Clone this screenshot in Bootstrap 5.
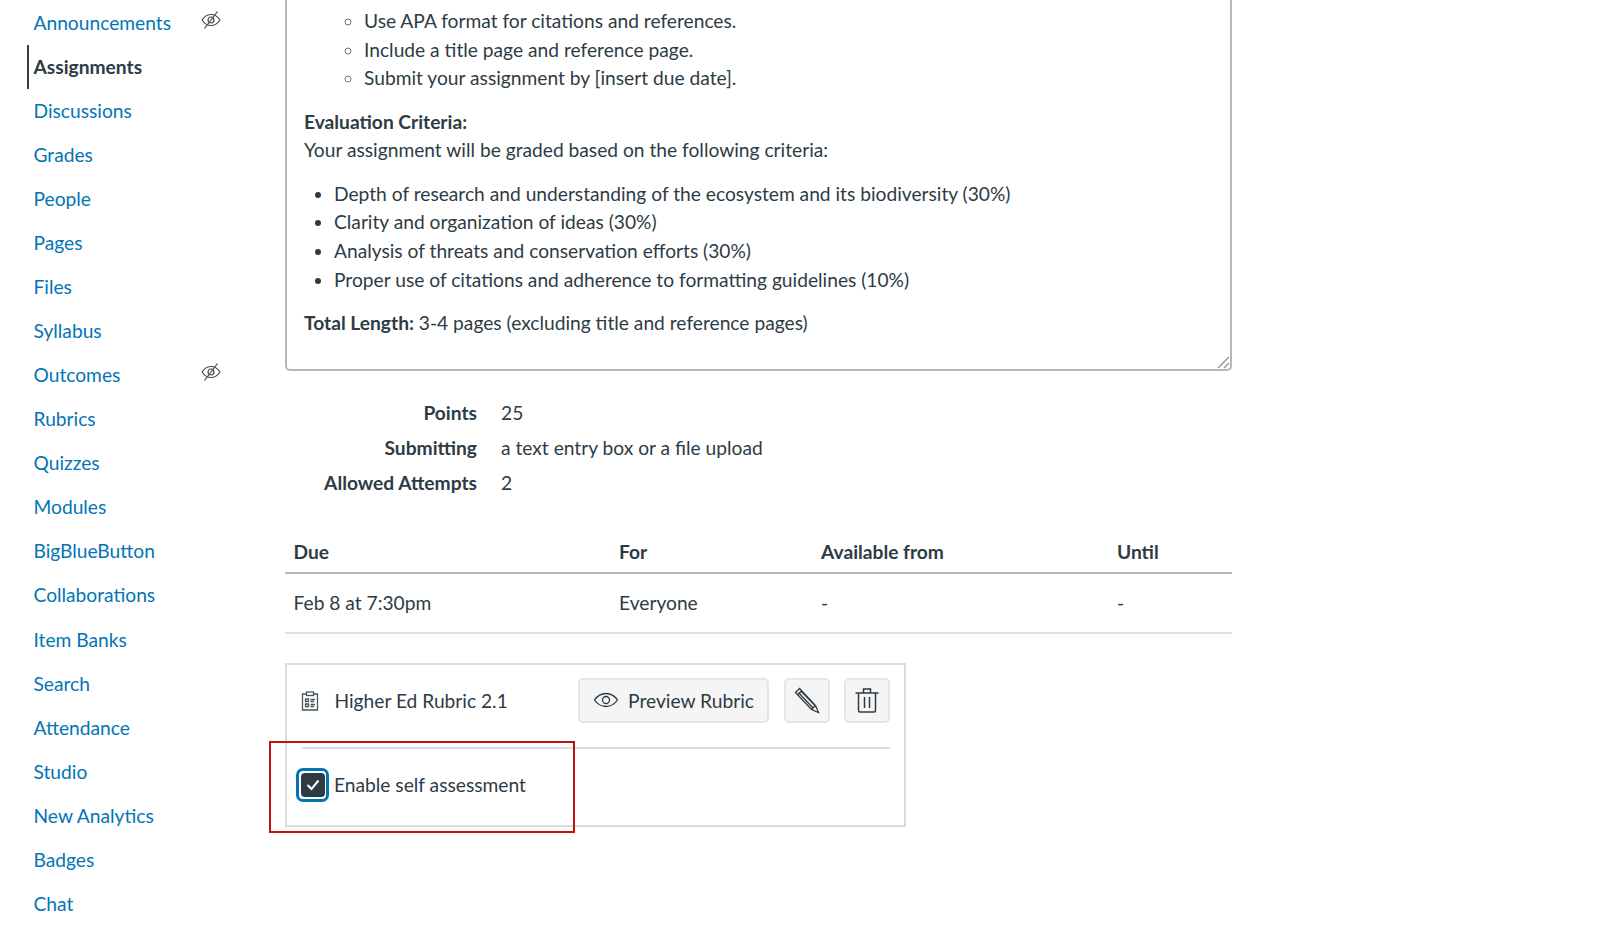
<!doctype html>
<html lang="en"><head><meta charset="utf-8"><title>Assignment</title>
<link href="https://cdn.jsdelivr.net/npm/bootstrap@5.3.0/dist/css/bootstrap.min.css" rel="stylesheet">
<style>
html,body{height:931px;overflow:hidden;background:#fff}
body{font-family:Lato,"Liberation Sans",sans-serif;font-size:19.2px;line-height:28.8px;color:#2d3b45}
.page-wrap{height:931px;overflow:hidden}
.side-col{width:285px;flex:none;padding-left:27px;padding-top:1px}
.side-list{margin:0;padding:0;list-style:none}
.side-item{height:44.07px;display:flex;align-items:center;justify-content:space-between;padding-left:4.5px;padding-right:64px;border-left:2px solid transparent}
.side-item a{color:#0374b5;text-decoration:none}
.side-item.on{border-left-color:#2d3b45}
.side-item.on a{color:#2d3b45;font-weight:700}
.eye-ic{width:20px;height:20px;margin-top:-7px}
.main-col{width:947px;flex:none}
.editor-box{position:relative;border:2px solid #b4b8bb;border-top:0;border-radius:0 0 5px 5px;padding:6.900px 18px 16.700px 17px}
.editor-box p{margin:0 0 14.4px}
.editor-box ul{margin:0 0 14.4px;padding-left:30px}
.editor-box ul ul{list-style:circle}
.editor-box ul ul li::marker{color:#6b7780}
.resize-grip{position:absolute;right:0;bottom:0;width:13px;height:13px}
.meta-wrap{margin-top:24.5px}
.meta-row{height:35px;gap:24px}
.meta-label{width:192px;text-align:right;font-weight:700}
.due-table{margin-top:34.1px;width:947px;table-layout:fixed;margin-bottom:0;--bs-table-color:#2d3b45}
.due-table th,.due-table td{padding:0 9px 0 8.500px;vertical-align:middle;font-size:19.2px}
.due-table thead tr{height:38px}
.due-table thead th{border-bottom:2px solid #b4b8bb;padding-bottom:1px}
.due-table tbody tr{height:60px}
.due-table tbody td{border-bottom:2px solid #dfe1e3;padding-top:2px}
.rubric-box{position:relative;width:621px;height:164px;margin-top:29px;border:2px solid #d8dcdf;padding:13px 14px 0 14px}
.rubric-top{height:45px;gap:14.5px}
.rubric-clip{margin-top:2px}
.rubric-title{margin-left:1px;margin-right:auto;margin-top:2px}
.soft-btn{background:#f5f5f5;border:2px solid #e3e5e7;border-radius:5px;height:45px;color:#2d3b45;font-size:19.2px;line-height:1;display:flex;align-items:center;justify-content:center;padding:0}
.soft-btn:hover{background:#f5f5f5}
.btn-preview{width:191px;gap:9px}
.btn-square{width:46px}
.rubric-rule{margin:24px 0 0 1px;border:0;border-top:2px solid #d8dcdf;opacity:1}
.self-row{margin-top:19px;margin-left:-5px}
.self-label{margin-top:2px}
.check-ring{width:33px;height:34px;border:3px solid #0374b5;border-radius:7px;padding:2px 1.500px;margin-right:5px;flex:none}
.check-box{width:100%;height:100%;background:#2d3b45;border-radius:4px;display:flex;align-items:center;justify-content:center}
.red-frame{position:absolute;left:-18px;top:76px;width:306px;height:92px;border:2px solid #bd1111;pointer-events:none}
</style></head>
<body>
<div class="page-wrap d-flex">
<nav class="side-col">
<ul class="side-list">
<li class="side-item"><a href="#">Announcements</a><svg class="eye-ic" viewBox="0 0 20 20" fill="none" stroke="#3f4a52" stroke-width="1.2"><path d="M1 10C4 5.500 7 4.500 10 4.500S16 5.500 19 10C16 14.500 13 15.500 10 15.500S4 14.500 1 10Z"/><circle cx="10" cy="10" r="3"/><path d="M16.500 1.500 3.500 18.500"/></svg></li>
<li class="side-item on"><a href="#">Assignments</a></li>
<li class="side-item"><a href="#">Discussions</a></li>
<li class="side-item"><a href="#">Grades</a></li>
<li class="side-item"><a href="#">People</a></li>
<li class="side-item"><a href="#">Pages</a></li>
<li class="side-item"><a href="#">Files</a></li>
<li class="side-item"><a href="#">Syllabus</a></li>
<li class="side-item"><a href="#">Outcomes</a><svg class="eye-ic" viewBox="0 0 20 20" fill="none" stroke="#3f4a52" stroke-width="1.2"><path d="M1 10C4 5.500 7 4.500 10 4.500S16 5.500 19 10C16 14.500 13 15.500 10 15.500S4 14.500 1 10Z"/><circle cx="10" cy="10" r="3"/><path d="M16.500 1.500 3.500 18.500"/></svg></li>
<li class="side-item"><a href="#">Rubrics</a></li>
<li class="side-item"><a href="#">Quizzes</a></li>
<li class="side-item"><a href="#">Modules</a></li>
<li class="side-item"><a href="#">BigBlueButton</a></li>
<li class="side-item"><a href="#">Collaborations</a></li>
<li class="side-item"><a href="#">Item Banks</a></li>
<li class="side-item"><a href="#">Search</a></li>
<li class="side-item"><a href="#">Attendance</a></li>
<li class="side-item"><a href="#">Studio</a></li>
<li class="side-item"><a href="#">New Analytics</a></li>
<li class="side-item"><a href="#">Badges</a></li>
<li class="side-item"><a href="#">Chat</a></li>
</ul>
</nav>
<main class="main-col">
<div class="editor-box">
<ul><li class="list-unstyled"><ul>
<li>Use APA format for citations and references.</li>
<li>Include a title page and reference page.</li>
<li>Submit your assignment by [insert due date].</li>
</ul></li></ul>
<p><strong>Evaluation Criteria:</strong><br>Your assignment will be graded based on the following criteria:</p>
<ul>
<li>Depth of research and understanding of the ecosystem and its biodiversity (30%)</li>
<li>Clarity and organization of ideas (30%)</li>
<li>Analysis of threats and conservation efforts (30%)</li>
<li>Proper use of citations and adherence to formatting guidelines (10%)</li>
</ul>
<p><strong>Total Length:</strong> 3-4 pages (excluding title and reference pages)</p>
<svg class="resize-grip" viewBox="0 0 13 13" fill="none" stroke="#8a8f93" stroke-width="1.300"><path d="M1 12 12 1M7 12 12 7"/></svg>
</div>
<div class="meta-wrap">
<div class="meta-row d-flex align-items-center"><div class="meta-label">Points</div><div>25</div></div>
<div class="meta-row d-flex align-items-center"><div class="meta-label">Submitting</div><div>a text entry box or a file upload</div></div>
<div class="meta-row d-flex align-items-center"><div class="meta-label">Allowed Attempts</div><div>2</div></div>
</div>
<table class="table due-table">
<colgroup><col style="width:325.5px"><col style="width:202px"><col style="width:296px"><col></colgroup>
<thead><tr><th>Due</th><th>For</th><th>Available from</th><th>Until</th></tr></thead>
<tbody><tr><td>Feb 8 at 7:30pm</td><td>Everyone</td><td>-</td><td>-</td></tr></tbody>
</table>
<div class="rubric-box">
<div class="rubric-top d-flex align-items-center">
<svg class="rubric-clip" width="18" height="20" viewBox="0 0 18 20" fill="none" stroke="#4a555d" stroke-width="1.300"><path d="M5.500 3H1.500V19H16.500V3H12.500"/><rect x="5.500" y="1" width="7" height="3.500"/><path d="M4.500 8H7.500V10.500H4.500ZM4.500 13H7.500V15.500H4.500ZM9.500 8.500H14M9.500 10.500H13M9.500 13.500H14M9.500 15.500H13"/></svg>
<span class="rubric-title">Higher Ed Rubric 2.1</span>
<button class="btn soft-btn btn-preview" type="button"><svg width="26" height="20" viewBox="0 0 26 20" fill="none" stroke="#2d3b45" stroke-width="1.300"><path d="M1.500 10C5 5 9 3.500 13 3.500S21 5 24.500 10C21 15 17 16.500 13 16.500S5 15 1.500 10Z"/><circle cx="13" cy="10" r="3.500"/></svg>Preview Rubric</button>
<button class="btn soft-btn btn-square" type="button" aria-label="Edit"><svg width="26" height="27" viewBox="0 0 26 27" fill="none" stroke="#2d3b45" stroke-width="1.300"><path d="M1.500 5.500 5.500 1.500 21.500 18.500 24.500 25.500 17.500 22.500Z"/><path d="M3.500 8 8 3.500M4.500 5.500 19 21M7.500 4.500 20.500 18M17.500 22.500 21.500 18.500"/></svg></button>
<button class="btn soft-btn btn-square" type="button" aria-label="Delete"><svg width="24" height="25" viewBox="0 0 24 25" fill="none" stroke="#2d3b45" stroke-width="1.500"><path d="M.5 5H23.500M8.500 5V1H15.500V5M3.500 5V22.500Q3.500 24 5 24H19Q20.500 24 20.500 22.500V5M9.500 9V20M14.500 9V20"/></svg></button>
</div>
<hr class="rubric-rule">
<div class="self-row d-flex align-items-center">
<div class="check-ring"><div class="check-box"><svg width="14" height="12" viewBox="0 0 14 12" fill="none" stroke="#fff" stroke-width="2"><path d="M1.500 6 5.500 10 12.500 1.500"/></svg></div></div>
<span class="self-label">Enable self assessment</span>
</div>
<div class="red-frame"></div>
</div>
</main>
</div>
<script src="https://cdn.jsdelivr.net/npm/bootstrap@5.3.0/dist/js/bootstrap.bundle.min.js"></script>
</body></html>
